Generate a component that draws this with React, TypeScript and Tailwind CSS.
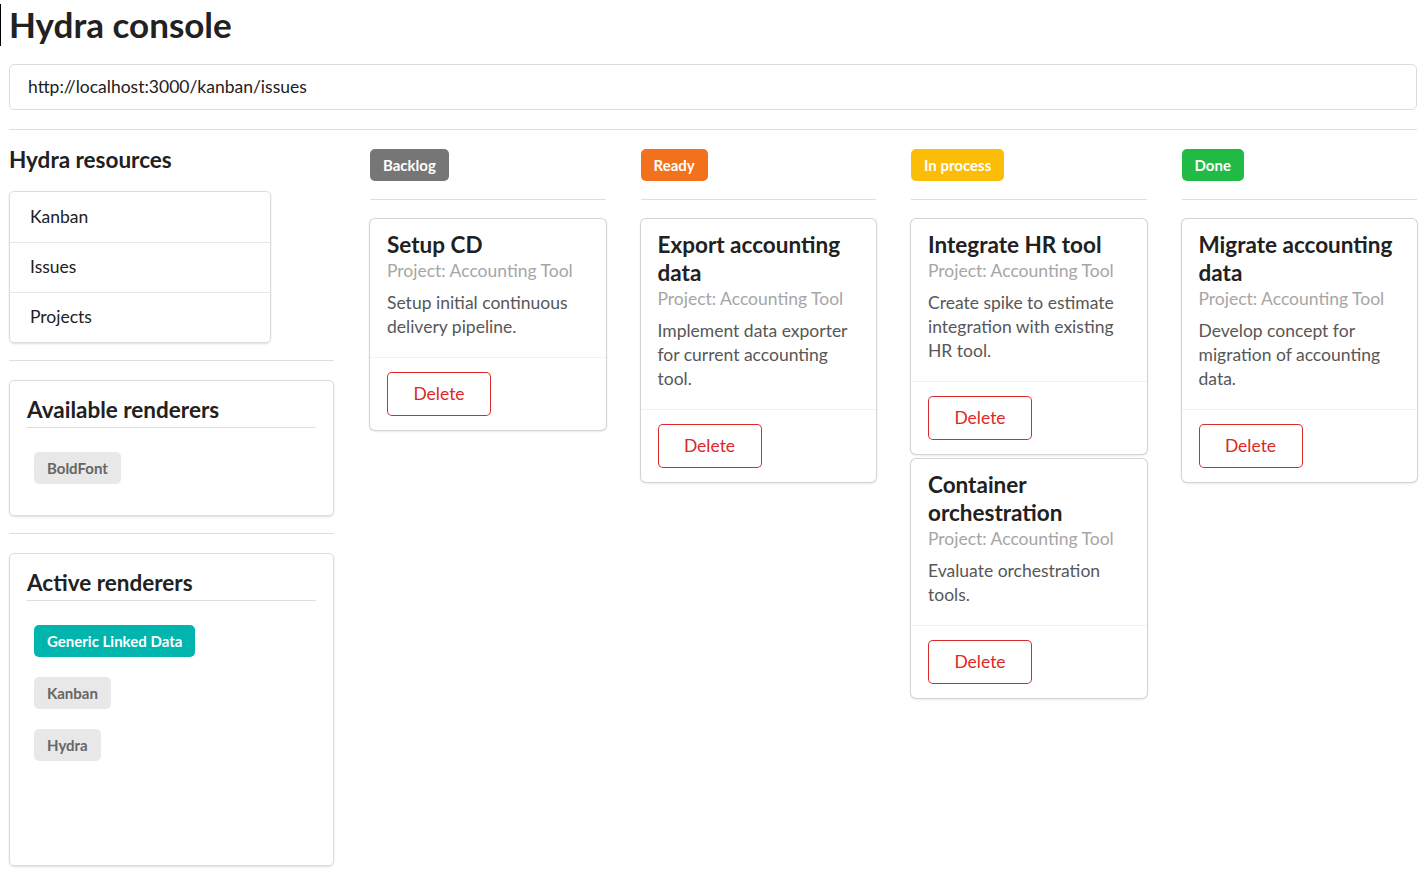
import React from 'react';

type Issue = { title: string; description: string };
type Column = { name: string; color: string; issues: Issue[] };

const columns: Column[] = [
    {
        name: 'Backlog',
        color: 'bg-[#767676]',
        issues: [{ title: 'Setup CD', description: 'Setup initial continuous delivery pipeline.' }],
    },
    {
        name: 'Ready',
        color: 'bg-[#f2711c]',
        issues: [{ title: 'Export accounting data', description: 'Implement data exporter for current accounting tool.' }],
    },
    {
        name: 'In process',
        color: 'bg-[#fbbd08]',
        issues: [
            { title: 'Integrate HR tool', description: 'Create spike to estimate integration with existing HR tool.' },
            { title: 'Container orchestration', description: 'Evaluate orchestration tools.' },
        ],
    },
    {
        name: 'Done',
        color: 'bg-[#21ba45]',
        issues: [{ title: 'Migrate accounting data', description: 'Develop concept for migration of accounting data.' }],
    },
];

const Divider = ({ className = '' }: { className?: string }) => (
    <div className={`border-t border-[#dededf] ${className}`} />
);

const Label = ({ children, className = 'bg-[#e8e8e8] text-[#666]' }: { children: React.ReactNode; className?: string }) => (
    <span className={`inline-block rounded-[5px] px-[13px] py-[8.5px] text-[15px] font-bold leading-[15px] ${className}`}>
        {children}
    </span>
);

const IssueCard = ({ issue }: { issue: Issue }) => (
    <div className="rounded-[5px] bg-white shadow-[0_1px_3px_0_#d4d4d5,0_0_0_1px_#d4d4d5]">
        <div className="px-[17px] pt-[12px] pb-[18px]">
            <div className="text-[22.5px] font-bold leading-[28px] text-[#212121]">{issue.title}</div>
            <div className="text-[17.5px] leading-[24px] text-[#a6a6a6]">Project: Accounting Tool</div>
            <div className="mt-[8px] text-[17.5px] leading-[24px] text-[#575757]">{issue.description}</div>
        </div>
        <div className="border-t border-[#f2f2f2] px-[17px] pt-[14px] pb-[14px]">
            <button className="h-[44px] w-[104px] rounded-[5px] bg-white text-[17.5px] text-[#db2828] shadow-[inset_0_0_0_1px_#db2828]">
                Delete
            </button>
        </div>
    </div>
);

const App: React.FC = () => {
    return (
        <div className="relative min-h-screen bg-white pl-[9px] pr-[10px] text-[#212121] font-['Lato','Liberation_Sans',sans-serif]">
            <div className="absolute left-0 top-[4px] h-[42px] w-px bg-black" />

            <h1 className="pt-[2px] text-[35px] font-bold leading-[45px]">Hydra console</h1>

            <div className="mt-[17px] flex h-[46px] items-center rounded-[5px] border border-[#dcdcdd] px-[18px] text-[17.5px] text-[#212121]">
                http://localhost:3000/kanban/issues
            </div>

            <Divider className="mt-[19px]" />

            <div className="mt-[19px] flex items-start">
                {/* left side */}
                <div className="w-[325px] shrink-0">
                    <h3 className="-mt-[3px] text-[22.5px] font-bold leading-[28px]">Hydra resources</h3>
                    <div className="mt-[17px] w-[262px] rounded-[5px] border border-[#dcdcdd] shadow-[0_1px_2px_0_rgba(34,36,38,0.15)]">
                        {['Kanban', 'Issues', 'Projects'].map((item, i) => (
                            <div
                                key={item}
                                className={`flex h-[50px] items-center px-[20px] text-[17.5px] ${i > 0 ? 'border-t border-[#e6e6e6]' : ''}`}
                            >
                                {item}
                            </div>
                        ))}
                    </div>

                    <Divider className="mt-[17px]" />

                    <div className="mt-[19px] h-[136px] rounded-[5px] border border-[#dcdcdd] px-[17px] pt-[16px] shadow-[0_1px_2px_0_rgba(34,36,38,0.15)]">
                        <h3 className="border-b border-[#dededf] pb-[4px] text-[22.5px] font-bold leading-[26px]">Available renderers</h3>
                        <div className="mt-[24px] pl-[7px]">
                            <Label>BoldFont</Label>
                        </div>
                    </div>

                    <Divider className="mt-[17px]" />

                    <div className="mt-[19px] h-[313px] rounded-[5px] border border-[#dcdcdd] px-[17px] pt-[16px] shadow-[0_1px_2px_0_rgba(34,36,38,0.15)]">
                        <h3 className="border-b border-[#dededf] pb-[4px] text-[22.5px] font-bold leading-[26px]">Active renderers</h3>
                        <div className="mt-[24px] flex flex-col items-start gap-[20px] pl-[7px]">
                            <Label className="bg-[#00b5ad] text-white">Generic Linked Data</Label>
                            <Label>Kanban</Label>
                            <Label>Hydra</Label>
                        </div>
                    </div>
                </div>

                {/* kanban board */}
                <div className="ml-[36px] grid flex-1 grid-cols-4 gap-[35px]">
                    {columns.map((col) => (
                        <div key={col.name}>
                            <Label className={`${col.color} text-white`}>{col.name}</Label>
                            <Divider className="mt-[18px]" />
                            <div className="mt-[19px] flex flex-col gap-[5px]">
                                {col.issues.map((issue) => (
                                    <IssueCard key={issue.title} issue={issue} />
                                ))}
                            </div>
                        </div>
                    ))}
                </div>
            </div>
        </div>
    );
};

export default App;
